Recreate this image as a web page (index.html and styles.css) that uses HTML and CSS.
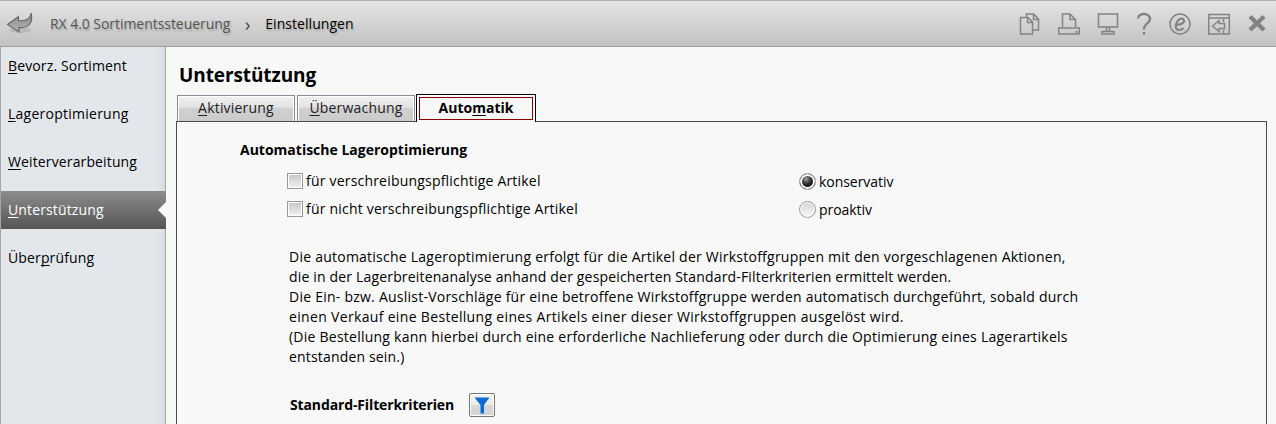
FILE: index.html
```
<!DOCTYPE html>
<html lang="de">
<head>
    <meta charset="UTF-8">
    <meta name="viewport" content="width=device-width, initial-scale=1.0">
    <title>RX 4.0 Sortimentssteuerung - Einstellungen</title>
    <link rel="stylesheet" href="styles.css">
</head>
<body>

<header class="topbar">
    <svg class="back" width="28" height="24" viewBox="0 0 28 24">
        <defs>
            <linearGradient id="backFill" x1="0" y1="0" x2="0" y2="1">
                <stop offset="0" stop-color="#8a8a8a"/>
                <stop offset="1" stop-color="#b4b4b4"/>
            </linearGradient>
        </defs>
        <ellipse class="back-shadow" cx="14" cy="18" rx="11" ry="3"/>
        <path d="M1.500 12.500 L12.500 4.500 V8.500 C19 9.500 24 7.500 25.300 1 C27 10 23.500 16.500 13 15.500 V20 Z" fill="url(#backFill)" stroke="#666" stroke-width="1.100"/>
    </svg>
    <span class="crumb">RX 4.0 Sortimentssteuerung</span>
    <span class="crumb-sep">›</span>
    <span class="crumb current">Einstellungen</span>

    <div class="tools">
        <svg class="tool" width="22" height="24" viewBox="0 0 22 24">
            <path d="M7.500 5 V2 H14.500 L19.500 7 V18 H13.500 M14.500 2 V7.500 H19.500"/>
            <path d="M1.500 5.500 H9 L13.500 10 V22 H1.500 Z M8.500 5.500 V10.500 H13.500"/>
        </svg>
        <svg class="tool" width="24" height="24" viewBox="0 0 24 24">
            <path d="M5.500 15 V2 H13 L18.500 7.500 V15 M13 2 V7.500 H18.500"/>
            <path d="M1.700 16 H22.300 V22 H1.700 Z M18 20 H21"/>
        </svg>
        <svg class="tool" width="22" height="24" viewBox="0 0 22 24">
            <path d="M1.500 2 H20.500 V15 H1.500 Z"/>
            <path d="M9.500 15 V19 M12.500 15 V19 M5 19.500 H17 V22 H5 Z"/>
        </svg>
        <svg class="tool help" width="18" height="24" viewBox="-1 0 18 24">
            <path d="M2 6.500 C2.500 0.500 14 0.500 14 7 C14 11.500 8 11 8 17.500 M8 20 V22.500"/>
        </svg>
        <svg class="tool" width="22" height="24" viewBox="1 0 22 24">
            <circle cx="12" cy="12" r="10"/>
            <path class="thick" d="M7.500 12.500 C12 13.500 16.500 11 16 8.500 C15.500 5.500 11 6 9 10 C6.500 14.500 8 18 11 18 C13 18 14.500 17 15.500 16"/>
        </svg>
        <svg class="tool" width="24" height="24" viewBox="0 0 24 24">
            <path d="M1.700 2.500 H22.300 V22 H1.700 Z M1.700 6 H22.300 M16.500 6 V10 M16.500 18 V22"/>
            <path d="M5.500 14 L12 8.500 V11.500 H17.500 V16.500 H12 V19.500 Z"/>
        </svg>
        <svg class="tool close" width="20" height="24" viewBox="0 0 20 24">
            <path d="M3 4.500 L17 18 M17 4.500 L3 18"/>
        </svg>
    </div>
</header>

<div class="layout">
    <nav class="sidebar">
        <a class="nav-item"><span><u>B</u>evorz. Sortiment</span></a>
        <a class="nav-item wide"><span><u>L</u>ageroptimierung</span></a>
        <a class="nav-item"><span><u>W</u>eiterverarbeitung</span></a>
        <a class="nav-item active"><span><u>U</u>nterstützung</span></a>
        <a class="nav-item"><span>Über<u>p</u>rüfung</span></a>
    </nav>

    <main class="content">
        <h1>Unterstützung</h1>

        <div class="tabs">
            <div class="tab"><u>A</u>ktivierung</div>
            <div class="tab"><u>Ü</u>berwachung</div>
            <div class="tab selected"><span class="focus">Auto<u>m</u>atik</span></div>
        </div>

        <section class="panel">
            <h2>Automatische Lageroptimierung</h2>

            <div class="options">
                <div class="checks">
                    <label class="option"><span class="checkbox"></span><span>für verschreibungspflichtige Artikel</span></label>
                    <label class="option"><span class="checkbox"></span><span>für nicht verschreibungspflichtige Artikel</span></label>
                </div>
                <div class="radios">
                    <label class="option"><span class="radio checked"></span><span class="radio-text">konservativ</span></label>
                    <label class="option"><span class="radio"></span><span class="radio-text">proaktiv</span></label>
                </div>
            </div>

            <p class="info">
                <span class="line">Die automatische Lageroptimierung erfolgt für die Artikel der Wirkstoffgruppen mit den vorgeschlagenen Aktionen,</span>
                <span class="line tight">die in der Lagerbreitenanalyse anhand der gespeicherten Standard-Filterkriterien ermittelt werden.</span>
                <span class="line">Die Ein- bzw. Auslist-Vorschläge für eine betroffene Wirkstoffgruppe werden automatisch durchgeführt, sobald durch</span>
                <span class="line loose">einen Verkauf eine Bestellung eines Artikels einer dieser Wirkstoffgruppen ausgelöst wird.</span>
                <span class="line">(Die Bestellung kann hierbei durch eine erforderliche Nachlieferung oder durch die Optimierung eines Lagerartikels</span>
                <span class="line tight">entstanden sein.)</span>
            </p>

            <div class="filter">
                <h2>Standard-Filterkriterien</h2>
                <button class="filter-button" type="button">
                    <svg width="16" height="17" viewBox="0 0 16 17">
                        <path d="M0.500 0.500 H15.500 L10 8 V16.500 H6.500 V8 Z"/>
                    </svg>
                </button>
            </div>
        </section>
    </main>
</div>

</body>
</html>
```
FILE: styles.css
```
* {
    box-sizing: border-box;
}
body {
    margin: 0;
    height: 424px;
    overflow: hidden;
    display: flex;
    flex-direction: column;
    background-color: #f8f8f8;
    color: #000;
    font-family: "Open Sans", "Noto Sans", sans-serif;
    font-size: 14px;
    line-height: 20px;
    white-space: nowrap;
}
h1, h2, p {
    margin: 0;
}
u {
    text-decoration: underline;
    text-decoration-thickness: 1px;
    text-underline-offset: 2px;
    text-decoration-skip-ink: none;
}

/* header */
.topbar {
    flex: none;
    display: flex;
    align-items: center;
    height: 47px;
    padding: 0 9px 0 6px;
    border-top: 1px solid #b0b0b4;
    border-bottom: 1px solid #a0a0a0;
    background: linear-gradient(#e4e4e4, #c2c2c2);
}
.back {
    margin-right: 16px;
}
.back-shadow {
    fill: #999;
    opacity: 0.4;
}
.crumb {
    color: #555;
    letter-spacing: -0.05px;
    text-shadow: 1px 2px 2px rgba(0, 0, 0, 0.2);
}
.crumb.current {
    color: #000;
    letter-spacing: 0.05px;
}
.crumb-sep {
    width: 35px;
    text-align: center;
    font-size: 18px;
    color: #444;
}
.tools {
    display: flex;
    align-items: center;
    gap: 16px;
    margin-left: auto;
}
.tool {
    fill: none;
    stroke: #808487;
    stroke-width: 1.5;
}
.help {
    stroke-width: 2.4;
}
.thick {
    stroke-width: 2.2;
}
.close {
    stroke-width: 4.5;
}

/* sidebar */
.layout {
    flex: 1;
    display: flex;
    min-height: 0;
}
.sidebar {
    width: 166px;
    display: flex;
    flex-direction: column;
    gap: 10px;
    border-left: 1px solid #a5a5a5;
    background: linear-gradient(90deg, #e3e7ec 155px, #d9dde2 164px, #a5a5a5 164px);
}
.nav-item {
    display: flex;
    align-items: center;
    height: 38px;
    padding-left: 7px;
    letter-spacing: 0.13px;
}
.nav-item.wide {
    letter-spacing: 0.25px;
}
.nav-item.active {
    justify-content: space-between;
    color: #fff;
    background: linear-gradient(#8c8c8c, #555);
}
.nav-item.active::after {
    content: "";
    border: 8px solid transparent;
    border-right-color: #f8f8f8;
    border-left-width: 0;
}

/* content */
.content {
    flex: 1;
    padding: 15px 9px 0 10px;
    display: flex;
    flex-direction: column;
}
h1 {
    padding-left: 3px;
    font-size: 19px;
    line-height: 27px;
    letter-spacing: -0.1px;
}
h2 {
    font-size: 14px;
    line-height: 20px;
}
.tabs {
    display: flex;
    align-items: flex-end;
    height: 32px;
    padding-left: 1px;
}
.tab {
    width: 118px;
    height: 26px;
    margin-right: 2px;
    border: 1px solid #8b8b94;
    border-bottom: 0;
    box-shadow: inset 1px 1px #fff, inset -1px 0 #fff;
    background: linear-gradient(#f0f0f0, #e2e2e2 45%, #d0d0d0 50%, #cacaca);
    text-align: center;
    line-height: 23px;
    letter-spacing: 0.2px;
    color: #222;
}
.tab.selected {
    z-index: 1;
    display: flex;
    width: 120px;
    height: 28px;
    margin: 0 0 -1px -1px;
    padding: 2px;
    border-color: #000;
    background: #f8f8f8;
    color: #000;
    font-weight: bold;
    letter-spacing: 0;
}
.focus {
    flex: 1;
    height: 23px;
    border: 1px solid #8b0000;
    line-height: 20px;
}
.panel {
    flex: 1;
    padding: 18px 0 0 63px;
    border: 1px solid #4a4a58;
    border-bottom: 0;
}
.options {
    display: flex;
    padding: 7px 0 0 47px;
}
.checks {
    width: 512px;
    letter-spacing: 0.2px;
}
.option {
    display: flex;
    align-items: center;
    height: 28px;
    gap: 3px;
}
.checkbox {
    width: 16px;
    height: 16px;
    border: 1px solid #999;
    box-shadow: inset 0 0 0 1px #fff;
    background: linear-gradient(#c4c4c4, #f4f4f4);
}
.radio {
    width: 17px;
    height: 17px;
    border: 1px solid #999;
    border-radius: 50%;
    box-shadow: inset 0 0 0 1px #fff;
    background: linear-gradient(#d4d4d4, #fafafa);
}
.radio.checked {
    background: radial-gradient(circle at 6px 5px, #aaa 0, #555 3px, #222 6px);
    box-shadow: inset 0 0 0 2px #fff;
}
.radio-text {
    padding-top: 2px;
    letter-spacing: -0.05px;
}
.info {
    padding: 24px 0 0 49px;
}
.line {
    display: block;
    letter-spacing: 0.24px;
}
.line.tight {
    letter-spacing: 0.17px;
}
.line.loose {
    letter-spacing: 0.33px;
}
.filter {
    display: flex;
    align-items: center;
    gap: 15px;
    padding: 26px 0 0 50px;
}
.filter h2 {
    letter-spacing: -0.13px;
}
.filter-button {
    display: flex;
    align-items: center;
    justify-content: center;
    width: 26px;
    height: 24px;
    padding: 0;
    border: 1px solid #777;
    border-radius: 2px;
    box-shadow: inset 0 0 0 1px #fff;
    background: linear-gradient(#f0f0f0, #ececec 50%, #d8d8d8 50%, #d4d4d4);
}
.filter-button path {
    fill: #0a6cd6;
}
```
